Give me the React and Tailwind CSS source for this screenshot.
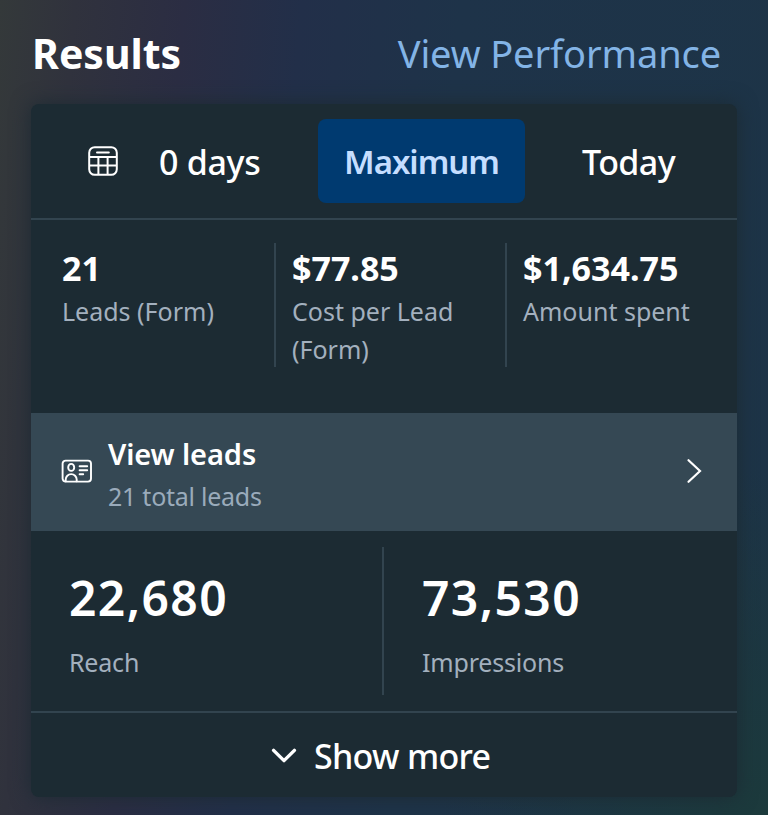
function CalendarIcon() {
  return (
    <svg className="h-[30px] w-[30px]" viewBox="0 0 30 30" fill="none" stroke="#fff" strokeWidth="2">
      <rect x="1.2" y="1.2" width="27.6" height="27.6" rx="5.5" />
      <path d="M1.2 11h27.6M1.2 19.6h27.6M10.4 11v17.8M19.6 11v17.8" />
      <path d="M9 6.4h11.8" strokeLinecap="round" />
    </svg>
  );
}

function LeadCardIcon() {
  return (
    <svg className="-mt-[2px] h-6 w-[31px]" viewBox="0 0 31 24" fill="none" stroke="#fff" strokeWidth="1.9" strokeLinecap="round">
      <rect x="1.6" y="1.6" width="28.4" height="21" rx="3" />
      <ellipse cx="10.2" cy="8.4" rx="3" ry="3.5" />
      <path d="M4.7 22.2v-1.6a5.5 5.5 0 0 1 11 0v1.6" />
      <path d="M18.6 7.3h7.6M18.6 11.3h7.6M18.6 15.2h3.6" />
    </svg>
  );
}

function Stat({ value, label }) {
  return (
    <div className="flex flex-col">
      <span className="text-[34px] leading-[50px] font-bold whitespace-nowrap text-white">{value}</span>
      <span className="-mt-px text-[25px] leading-[38px] text-[#a3b0be]">{label}</span>
    </div>
  );
}

function BigStat({ value, label }) {
  return (
    <div className="flex flex-col">
      <span className="text-[48px] leading-[64px] font-semibold tracking-[1.4px] text-white">{value}</span>
      <span className="mt-[14px] text-[25px] leading-[36px] tracking-[-0.2px] text-[#a3b0be]">{label}</span>
    </div>
  );
}

export default function App() {
  return (
    <div className="h-[815px] w-[768px] overflow-hidden bg-[radial-gradient(ellipse_at_100%_100%,#1c3a3c_0%,transparent_30%),linear-gradient(95deg,#34393a_0%,#30323d_9%,#2b2d43_22%,#222f49_36%,#1e3349_55%,#1d3447_100%)] px-[31px] font-['Noto_Sans','Open_Sans',sans-serif]">
      <header className="flex h-[104px] items-center justify-between pt-[2px] pr-[16px]">
        <h1 className="ml-px text-[41px] leading-[54px] font-bold text-white">Results</h1>
        <a className="text-[38px] leading-[54px] tracking-[-0.1px] text-[#83b4e6]">View Performance</a>
      </header>

      <main className="flex h-[693px] w-[706px] flex-col overflow-hidden rounded-lg bg-[#1c2b33] shadow-[0_0_20px_#1c2b33]">
        <nav className="flex h-[116px] items-center border-b-2 border-[#32444f] text-[34px] leading-[48px] font-medium text-white">
          <div className="flex w-[287px] items-center pl-[57px]">
            <CalendarIcon />
            <span className="ml-[41px] pt-[2px] tracking-[-0.3px]">0 days</span>
          </div>
          <div className="flex h-[84px] w-[207px] items-center justify-center rounded-lg bg-[#003a70] pt-[2px] text-[33px] font-semibold tracking-[-1.05px] text-[#c5deff]">Maximum</div>
          <div className="flex flex-1 items-center pt-[2px] pl-[57px] tracking-[-0.6px]">Today</div>
        </nav>

        <section className="flex h-[193px] pt-[23px]">
          <div className="h-[124px] w-[245px] border-r-2 border-[#32444f] pl-[31px]">
            <Stat value="21" label="Leads (Form)" />
          </div>
          <div className="h-[124px] w-[231px] border-r-2 border-[#32444f] pl-[16px]">
            <Stat value="$77.85" label="Cost per Lead (Form)" />
          </div>
          <div className="h-[124px] flex-1 pl-[16px]">
            <Stat value="$1,634.75" label="Amount spent" />
          </div>
        </section>

        <section className="flex h-[118px] shrink-0 items-center bg-[#354854] pr-[35px] pl-[30px]">
          <LeadCardIcon />
          <div className="ml-[16px] flex flex-1 flex-col pt-[5px]">
            <span className="text-[29px] leading-[42px] font-semibold tracking-[-0.1px] text-white">View leads</span>
            <span className="text-[25px] leading-[42px] tracking-[-0.25px] text-[#9aabbb]">21 total leads</span>
          </div>
          <svg className="-mt-[2px] h-[26px] w-[16px]" viewBox="0 0 16 26" fill="none" stroke="#fff" strokeWidth="2.2" strokeLinecap="round">
            <path d="M2.5 2.2 14 13 2.5 23.8" />
          </svg>
        </section>

        <section className="flex h-[182px] border-b-2 border-[#32444f] pt-4">
          <div className="h-[148px] w-[353px] border-r-2 border-[#32444f] pt-[19px] pl-[38px]">
            <BigStat value="22,680" label="Reach" />
          </div>
          <div className="h-[148px] flex-1 pt-[19px] pl-[38px]">
            <BigStat value="73,530" label="Impressions" />
          </div>
        </section>

        <footer className="flex flex-1 items-center pt-[2px] pl-[240px]">
          <svg className="h-[16px] w-[26px]" viewBox="0 0 26 16" fill="none" stroke="#fff" strokeWidth="3.4" strokeLinecap="round" strokeLinejoin="round">
            <path d="M2.6 2.4 13 12.6 23.4 2.4" />
          </svg>
          <span className="ml-[17px] text-[34px] leading-[48px] font-medium tracking-[-0.7px] text-white">Show more</span>
        </footer>
      </main>
    </div>
  );
}
